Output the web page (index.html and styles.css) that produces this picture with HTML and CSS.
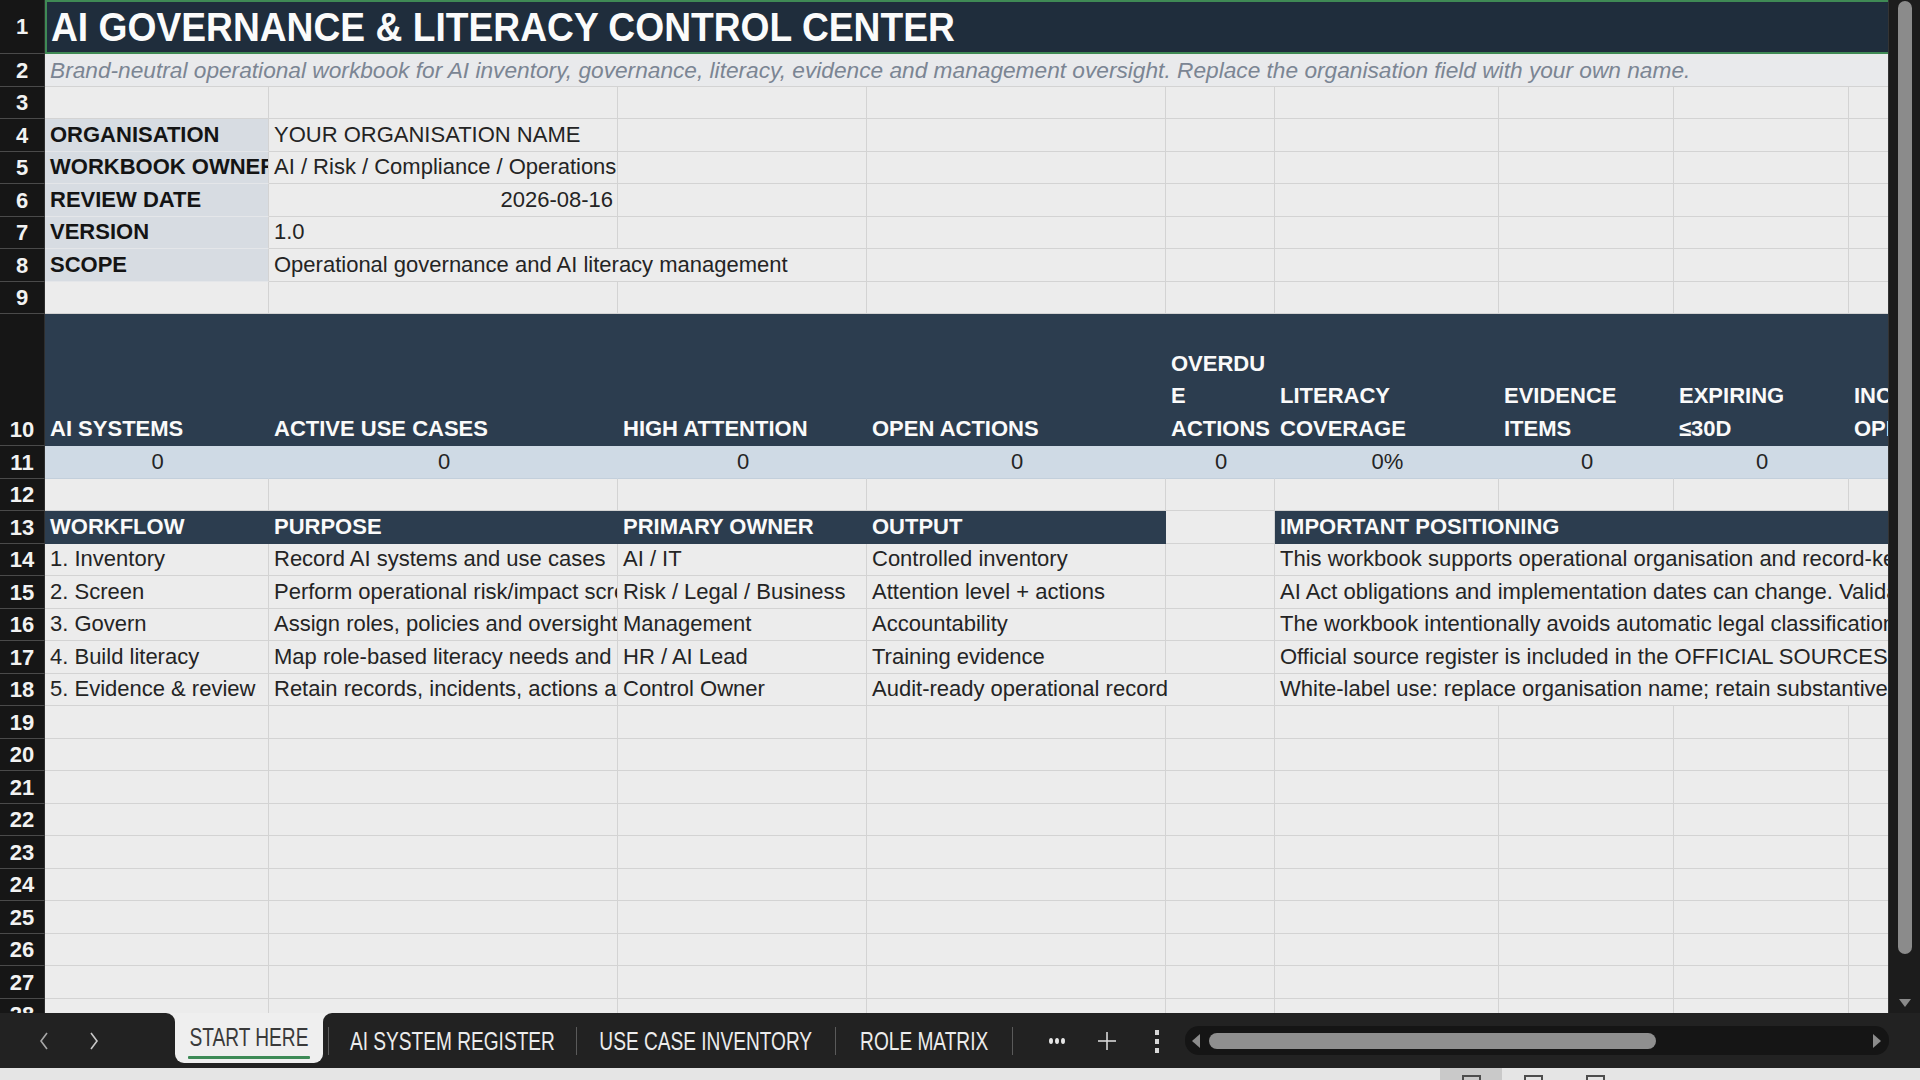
FILE: index.html
```html
<!DOCTYPE html>
<html lang="en">
<head>
<meta charset="utf-8">
<title>AI Governance &amp; Literacy Control Center</title>
<link rel="stylesheet" href="styles.css">
</head>
<body>
<div class="app">
  <div class="main">
    <div class="sheet">
      <div class="row r1">
        <div class="rh rh-mid">1</div>
        <div class="c title s9"><span class="tt">AI GOVERNANCE &amp; LITERACY CONTROL CENTER</span></div>
      </div>
      <div class="row">
        <div class="rh">2</div>
        <div class="c subtitle s9">Brand-neutral operational workbook for AI inventory, governance, literacy, evidence and management oversight. Replace the organisation field with your own name.</div>
      </div>
      <div class="row">
        <div class="rh">3</div>
        <div class="c"></div><div class="c"></div><div class="c"></div><div class="c"></div><div class="c"></div><div class="c"></div><div class="c"></div><div class="c"></div><div class="c"></div>
      </div>
      <div class="row">
        <div class="rh">4</div>
        <div class="c lbl">ORGANISATION</div>
        <div class="c">YOUR ORGANISATION NAME</div>
        <div class="c"></div><div class="c"></div><div class="c"></div><div class="c"></div><div class="c"></div><div class="c"></div><div class="c"></div>
      </div>
      <div class="row">
        <div class="rh">5</div>
        <div class="c lbl">WORKBOOK OWNER</div>
        <div class="c">AI / Risk / Compliance / Operations</div>
        <div class="c"></div><div class="c"></div><div class="c"></div><div class="c"></div><div class="c"></div><div class="c"></div><div class="c"></div>
      </div>
      <div class="row">
        <div class="rh">6</div>
        <div class="c lbl">REVIEW DATE</div>
        <div class="c right">2026-08-16</div>
        <div class="c"></div><div class="c"></div><div class="c"></div><div class="c"></div><div class="c"></div><div class="c"></div><div class="c"></div>
      </div>
      <div class="row">
        <div class="rh">7</div>
        <div class="c lbl">VERSION</div>
        <div class="c">1.0</div>
        <div class="c"></div><div class="c"></div><div class="c"></div><div class="c"></div><div class="c"></div><div class="c"></div><div class="c"></div>
      </div>
      <div class="row">
        <div class="rh">8</div>
        <div class="c lbl">SCOPE</div>
        <div class="c s2">Operational governance and AI literacy management</div>
        <div class="c"></div><div class="c"></div><div class="c"></div><div class="c"></div><div class="c"></div><div class="c"></div>
      </div>
      <div class="row">
        <div class="rh">9</div>
        <div class="c"></div><div class="c"></div><div class="c"></div><div class="c"></div><div class="c"></div><div class="c"></div><div class="c"></div><div class="c"></div><div class="c"></div>
      </div>
      <div class="row r10">
        <div class="rh">10</div>
        <div class="c hd kh"><span>AI SYSTEMS</span></div>
        <div class="c hd kh"><span>ACTIVE USE CASES</span></div>
        <div class="c hd kh"><span>HIGH ATTENTION</span></div>
        <div class="c hd kh"><span>OPEN ACTIONS</span></div>
        <div class="c hd kh narrow"><span>OVERDUE ACTIONS</span></div>
        <div class="c hd kh"><span>LITERACY COVERAGE</span></div>
        <div class="c hd kh"><span>EVIDENCE ITEMS</span></div>
        <div class="c hd kh"><span>EXPIRING<br>≤30D</span></div>
        <div class="c hd kh"><span>INCIDENTS OPEN</span></div>
      </div>
      <div class="row">
        <div class="rh">11</div>
        <div class="c kv">0</div>
        <div class="c kv">0</div>
        <div class="c kv">0</div>
        <div class="c kv">0</div>
        <div class="c kv">0</div>
        <div class="c kv">0%</div>
        <div class="c kv">0</div>
        <div class="c kv">0</div>
        <div class="c kv">0</div>
      </div>
      <div class="row">
        <div class="rh">12</div>
        <div class="c"></div><div class="c"></div><div class="c"></div><div class="c"></div><div class="c"></div><div class="c"></div><div class="c"></div><div class="c"></div><div class="c"></div>
      </div>
      <div class="row">
        <div class="rh">13</div>
        <div class="c hd">WORKFLOW</div>
        <div class="c hd">PURPOSE</div>
        <div class="c hd">PRIMARY OWNER</div>
        <div class="c hd">OUTPUT</div>
        <div class="c"></div>
        <div class="c hd s4">IMPORTANT POSITIONING</div>
      </div>
      <div class="row">
        <div class="rh">14</div>
        <div class="c">1. Inventory</div>
        <div class="c">Record AI systems and use cases</div>
        <div class="c">AI / IT</div>
        <div class="c">Controlled inventory</div>
        <div class="c"></div>
        <div class="c s4">This workbook supports operational organisation and record-keeping. It does not replace legal advice.</div>
      </div>
      <div class="row">
        <div class="rh">15</div>
        <div class="c">2. Screen</div>
        <div class="c">Perform operational risk/impact screening</div>
        <div class="c">Risk / Legal / Business</div>
        <div class="c">Attention level + actions</div>
        <div class="c"></div>
        <div class="c s4">AI Act obligations and implementation dates can change. Validate against official sources.</div>
      </div>
      <div class="row">
        <div class="rh">16</div>
        <div class="c">3. Govern</div>
        <div class="c">Assign roles, policies and oversight</div>
        <div class="c">Management</div>
        <div class="c">Accountability</div>
        <div class="c"></div>
        <div class="c s4">The workbook intentionally avoids automatic legal classification.</div>
      </div>
      <div class="row">
        <div class="rh">17</div>
        <div class="c">4. Build literacy</div>
        <div class="c">Map role-based literacy needs and training</div>
        <div class="c">HR / AI Lead</div>
        <div class="c">Training evidence</div>
        <div class="c"></div>
        <div class="c s4">Official source register is included in the OFFICIAL SOURCES sheet.</div>
      </div>
      <div class="row">
        <div class="rh">18</div>
        <div class="c">5. Evidence &amp; review</div>
        <div class="c">Retain records, incidents, actions and reviews</div>
        <div class="c">Control Owner</div>
        <div class="c s2">Audit-ready operational record</div>
        <div class="c s4">White-label use: replace organisation name; retain substantive content.</div>
      </div>
      <div class="row"><div class="rh">19</div><div class="c"></div><div class="c"></div><div class="c"></div><div class="c"></div><div class="c"></div><div class="c"></div><div class="c"></div><div class="c"></div><div class="c"></div></div>
      <div class="row"><div class="rh">20</div><div class="c"></div><div class="c"></div><div class="c"></div><div class="c"></div><div class="c"></div><div class="c"></div><div class="c"></div><div class="c"></div><div class="c"></div></div>
      <div class="row"><div class="rh">21</div><div class="c"></div><div class="c"></div><div class="c"></div><div class="c"></div><div class="c"></div><div class="c"></div><div class="c"></div><div class="c"></div><div class="c"></div></div>
      <div class="row"><div class="rh">22</div><div class="c"></div><div class="c"></div><div class="c"></div><div class="c"></div><div class="c"></div><div class="c"></div><div class="c"></div><div class="c"></div><div class="c"></div></div>
      <div class="row"><div class="rh">23</div><div class="c"></div><div class="c"></div><div class="c"></div><div class="c"></div><div class="c"></div><div class="c"></div><div class="c"></div><div class="c"></div><div class="c"></div></div>
      <div class="row"><div class="rh">24</div><div class="c"></div><div class="c"></div><div class="c"></div><div class="c"></div><div class="c"></div><div class="c"></div><div class="c"></div><div class="c"></div><div class="c"></div></div>
      <div class="row"><div class="rh">25</div><div class="c"></div><div class="c"></div><div class="c"></div><div class="c"></div><div class="c"></div><div class="c"></div><div class="c"></div><div class="c"></div><div class="c"></div></div>
      <div class="row"><div class="rh">26</div><div class="c"></div><div class="c"></div><div class="c"></div><div class="c"></div><div class="c"></div><div class="c"></div><div class="c"></div><div class="c"></div><div class="c"></div></div>
      <div class="row"><div class="rh">27</div><div class="c"></div><div class="c"></div><div class="c"></div><div class="c"></div><div class="c"></div><div class="c"></div><div class="c"></div><div class="c"></div><div class="c"></div></div>
      <div class="row"><div class="rh">28</div><div class="c"></div><div class="c"></div><div class="c"></div><div class="c"></div><div class="c"></div><div class="c"></div><div class="c"></div><div class="c"></div><div class="c"></div></div>
    </div>
    <div class="vscroll">
      <div class="vthumb"></div>
      <svg class="varrow" width="14" height="10" viewBox="0 0 14 10"><polygon points="1,1 13,1 7,9" fill="#8a8a8a"/></svg>
    </div>
  </div>
  <div class="tabbar">
    <div class="nav">
      <svg width="12" height="22" viewBox="0 0 12 22"><polyline points="9,3 3,11 9,19" fill="none" stroke="#a8a8a8" stroke-width="1.6"/></svg>
      <svg width="12" height="22" viewBox="0 0 12 22"><polyline points="3,3 9,11 3,19" fill="none" stroke="#c8c8c8" stroke-width="1.6"/></svg>
    </div>
    <div class="slot">
      <div class="tab active">
        <span class="tl">START HERE</span>
        <span class="uline"></span>
      </div>
    </div>
    <div class="rest">
      <div class="sep first"></div>
      <div class="tab t2"><span class="tl">AI SYSTEM REGISTER</span></div>
      <div class="sep"></div>
      <div class="tab t3"><span class="tl">USE CASE INVENTORY</span></div>
      <div class="sep"></div>
      <div class="tab t4"><span class="tl">ROLE MATRIX</span></div>
      <div class="sep"></div>
      <div class="tools">
        <div class="tool"><svg width="18" height="8" viewBox="0 0 18 8"><ellipse cx="3" cy="4" rx="2" ry="3" fill="#e6e6e6"/><ellipse cx="9" cy="4" rx="2" ry="3" fill="#e6e6e6"/><ellipse cx="15" cy="4" rx="2" ry="3" fill="#e6e6e6"/></svg></div>
        <div class="tool"><svg width="20" height="20" viewBox="0 0 20 20"><line x1="10" y1="1" x2="10" y2="19" stroke="#d8d8d8" stroke-width="1.6"/><line x1="1" y1="10" x2="19" y2="10" stroke="#d8d8d8" stroke-width="1.6"/></svg></div>
        <div class="tool"><svg width="6" height="24" viewBox="0 0 6 24"><rect x="1" y="1" width="4" height="5" fill="#d8d8d8"/><rect x="1" y="10" width="4" height="5" fill="#d8d8d8"/><rect x="1" y="19" width="4" height="5" fill="#d8d8d8"/></svg></div>
      </div>
      <div class="hscroll">
        <svg class="harrow-l" width="10" height="16" viewBox="0 0 10 16"><polygon points="9,1 9,15 1,8" fill="#8c8c8c"/></svg>
        <div class="hthumb"></div>
        <svg class="harrow-r" width="10" height="16" viewBox="0 0 10 16"><polygon points="1,1 1,15 9,8" fill="#8c8c8c"/></svg>
      </div>
    </div>
  </div>
  <div class="status">
    <div class="vbtn on"><span class="vicon"></span></div>
    <div class="vbtn"><span class="vicon"></span></div>
    <div class="vbtn"><span class="vicon"></span></div>
  </div>
</div>
</body>
</html>
```
FILE: styles.css
```css
* { box-sizing: border-box; margin: 0; padding: 0; }
html, body { width: 1920px; height: 1080px; overflow: hidden; background: #ececec; }
body { font-family: "Liberation Sans", Arial, sans-serif; color: #222; }

.app { display: flex; flex-direction: column; width: 1920px; height: 1080px; }
.main { display: flex; height: 1013px; flex-shrink: 0; }

/* ---------- sheet grid ---------- */
.sheet {
  width: 1888px; height: 1013px; overflow: hidden;
  display: flex; flex-direction: column; background: #ececec;
}
.row {
  display: grid;
  grid-template-columns: 45px 224px 349px 249px 299px 109px 224px 175px 175px 175px;
  height: 32.5px; flex-shrink: 0;
}
.r1 { height: 54px; }
.r10 { height: 132px; }

.rh {
  background: #161616; color: #f2f2f2;
  font-size: 22px; font-weight: bold; line-height: 30px;
  display: flex; align-items: flex-end; justify-content: center;
  border-bottom: 1px solid #4a4a4a; border-right: 1px solid #2e2e2e;
}
.rh-mid { align-items: center; }

.c {
  border-right: 1px solid #d3d3d3; border-bottom: 1px solid #d3d3d3;
  padding: 0 3px 0 5px;
  display: flex; align-items: center;
  white-space: nowrap; overflow: hidden;
  font-size: 22px; line-height: 32px; color: #242424;
}
.s2 { grid-column: span 2; }
.s4 { grid-column: span 4; }
.s9 { grid-column: span 9; }

.title {
  background: #1f2d3c; color: #fbfbfb;
  font-weight: bold; line-height: 50px;
  border: 2px solid #3f8a55; padding-left: 4px;
}
.tt { display: inline-block; font-size: 40px; transform: scaleX(0.93); transform-origin: left center; }
.subtitle {
  background: #e9eaec; color: #7b8593;
  font-style: italic; font-size: 22.7px; border-right: none;
}
.lbl { background: #d7dce2; font-weight: bold; color: #141414; border-bottom-color: #e4e6e9; }
.right { justify-content: flex-end; padding-right: 4px; }

.hd {
  background: #2c3d4f; color: #fafafa; font-weight: bold;
  border-right-color: #2c3d4f; border-bottom-color: #2c3d4f;
}
.kh {
  flex-direction: column; align-items: stretch; justify-content: flex-end;
  white-space: normal; line-height: 32.5px;
}
.kh span { display: block; }
.narrow { padding-right: 1px; overflow-wrap: anywhere; }

.kv {
  background: #cfdae5; justify-content: center;
  border-right-color: #cfdae5; border-bottom-color: #c3cfdb;
}

/* ---------- vertical scrollbar ---------- */
.vscroll {
  width: 32px; height: 1013px; background: #1c1c1c;
  border-left: 1px solid #343434;
  display: flex; flex-direction: column; align-items: center;
}
.vthumb { width: 14px; height: 953px; border-radius: 7px; background: #8b8b8b; margin-top: 1px; }
.varrow { margin-top: 44px; }

/* ---------- sheet tabs ---------- */
.tabbar {
  height: 55px; flex-shrink: 0; background: #efefef;
  display: flex; align-items: stretch;
}
.nav {
  width: 175px; display: flex; align-items: center; padding-left: 38px; gap: 38px;
  background: #222222; border-top-right-radius: 9px;
}
.slot { width: 148px; background: #222222; flex-shrink: 0; }
.rest {
  flex: 1; display: flex; align-items: center;
  background: #222222; border-top-left-radius: 9px;
}
.tab { height: 55px; display: flex; align-items: center; justify-content: center; flex-shrink: 0; color: #ececec; }
.tl { display: inline-block; font-size: 26px; white-space: nowrap; transform: scaleX(0.735); line-height: 28px; }
.tab.active {
  width: 148px; height: 50px;
  background: #efefef; color: #3a3a3a;
  border-radius: 0 0 9px 9px;
  flex-direction: column; justify-content: flex-start; padding-top: 10px;
}
.uline { display: block; width: 122px; height: 3px; margin-top: 5px; background: #3d8a56; border-radius: 1px; }
.t2 { width: 247px; }
.t3 { width: 258px; }
.t4 { width: 176px; }
.sep { width: 1px; height: 28px; background: #5a5a5a; flex-shrink: 0; }
.sep.first { margin-left: 5px; }

.tools { display: flex; margin-left: 19px; }
.tool { width: 50px; height: 55px; display: flex; align-items: center; justify-content: center; }

.hscroll {
  width: 704px; height: 29px; margin-left: 3px;
  background: #151515; border-radius: 14px;
  display: flex; align-items: center;
}
.harrow-l { margin-left: 6px; }
.hthumb { width: 447px; height: 16px; margin-left: 8px; border-radius: 8px; background: #8f8f8f; }
.harrow-r { margin-left: auto; margin-right: 7px; }

/* ---------- status strip ---------- */
.status { height: 12px; flex-shrink: 0; background: #e5e5e5; display: flex; padding-left: 1440px; }
.vbtn { width: 62px; height: 12px; display: flex; justify-content: center; }
.vbtn.on { background: #c9c9c9; }
.vicon { width: 19px; height: 6px; margin-top: 7px; border: 2px solid #4d4d4d; border-bottom: none; }
```
